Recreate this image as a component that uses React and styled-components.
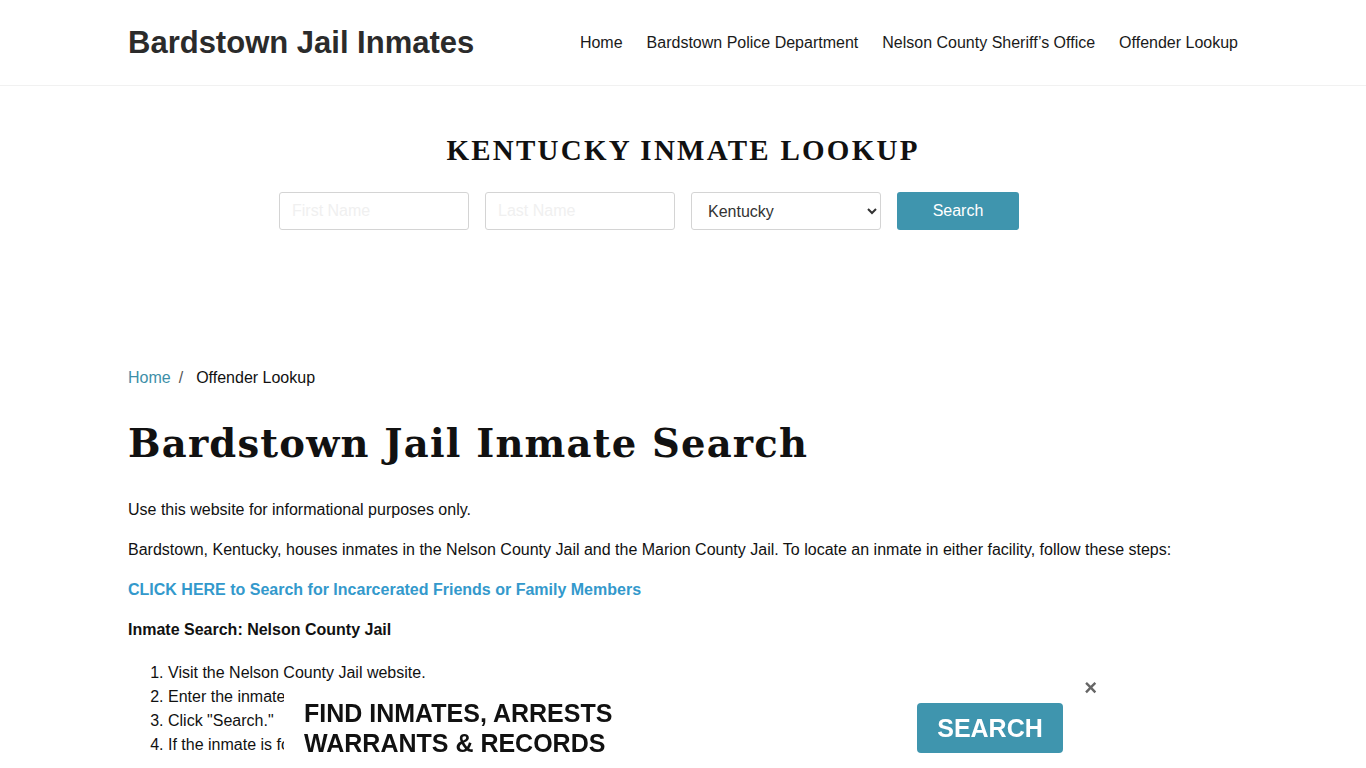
import React from "react";
import styled, { createGlobalStyle } from "styled-components";

const GlobalStyle = createGlobalStyle`
  body {
    margin: 0;
    background: #fff;
    font-family: "Liberation Sans", Arial, sans-serif;
    color: #111;
    font-size: 16px;
  }
`;

const App = () => {
  return (
    <>
      <GlobalStyle />
      <Header>
        <Container>
          <HeaderRow>
            <Brand>Bardstown Jail Inmates</Brand>
            <Nav>
              <NavLink>Home</NavLink>
              <NavLink>Bardstown Police Department</NavLink>
              <NavLink>Nelson County Sheriff’s Office</NavLink>
              <NavLink>Offender Lookup</NavLink>
            </Nav>
          </HeaderRow>
        </Container>
      </Header>

      <Hero>
        <HeroTitle>KENTUCKY INMATE LOOKUP</HeroTitle>
        <SearchForm>
          <Field type="text" placeholder="First Name" />
          <Field type="text" placeholder="Last Name" />
          <Select defaultValue="Kentucky">
            <option>Kentucky</option>
          </Select>
          <SearchButton type="button">Search</SearchButton>
        </SearchForm>
      </Hero>

      <Container>
        <Breadcrumb>
          <Crumb>Home</Crumb>
          <Slash>/</Slash>
          <span>Offender Lookup</span>
        </Breadcrumb>
        <PageTitle>Bardstown Jail Inmate Search</PageTitle>
        <Para>Use this website for informational purposes only.</Para>
        <Para>
          Bardstown, Kentucky, houses inmates in the Nelson County Jail and the
          Marion County Jail. To locate an inmate in either facility, follow
          these steps:
        </Para>
        <Para>
          <CtaLink>CLICK HERE to Search for Incarcerated Friends or Family Members</CtaLink>
        </Para>
        <Para $tight>
          <strong>Inmate Search: Nelson County Jail</strong>
        </Para>
        <Steps>
          <li>Visit the Nelson County Jail website.</li>
          <li>Enter the inmate's name in the search field.</li>
          <li>Click "Search."</li>
          <li>If the inmate is found, their details will be displayed.</li>
        </Steps>
      </Container>

      <Banner>
        <BannerText>
          FIND INMATES, ARRESTS
          <br />
          WARRANTS &amp; RECORDS
        </BannerText>
        <BannerButton type="button">SEARCH</BannerButton>
        <Close>×</Close>
      </Banner>
    </>
  );
};

export default App;

// STYLING SECTION:

const Container = styled.div`
  width: 1110px;
  margin: 0 auto;
`;

const Header = styled.header`
  height: 85px;
  border-bottom: 1px solid #f1f1f1;
`;

const HeaderRow = styled.div`
  display: flex;
  align-items: center;
  justify-content: space-between;
  height: 85px;
`;

const Brand = styled.div`
  font-size: 31px;
  font-weight: bold;
  color: #2b2b2b;
`;

const Nav = styled.nav`
  display: flex;
  gap: 24px;
`;

const NavLink = styled.a`
  font-size: 16px;
  color: #1a1a1a;
  cursor: pointer;
`;

const Hero = styled.section`
  display: flex;
  flex-direction: column;
  align-items: center;
  padding-top: 47px;
  height: 193px;
`;

const HeroTitle = styled.h2`
  margin: 0 0 25px;
  font-family: "Liberation Serif", "Times New Roman", serif;
  font-size: 29px;
  font-weight: bold;
  letter-spacing: 2.25px;
  color: #111;
  line-height: 34px;
`;

const SearchForm = styled.div`
  display: flex;
  gap: 16px;
  margin-right: 68px;
`;

const Field = styled.input`
  box-sizing: border-box;
  width: 190px;
  height: 38px;
  border: 1px solid #d4d4d4;
  border-radius: 3px;
  padding: 0 12px;
  font-family: "Liberation Sans", Arial, sans-serif;
  font-size: 16px;
  &::placeholder {
    color: #f0f0f0;
  }
`;

const Select = styled.select`
  box-sizing: border-box;
  width: 190px;
  height: 38px;
  border: 1px solid #d4d4d4;
  border-radius: 3px;
  padding: 0 12px;
  background: #fff;
  color: #333;
  font-family: "Liberation Sans", Arial, sans-serif;
  font-size: 16px;
`;

const SearchButton = styled.button`
  width: 122px;
  height: 38px;
  border: none;
  border-radius: 3px;
  background: #3f95ae;
  color: #fff;
  font-family: "Liberation Sans", Arial, sans-serif;
  font-size: 16px;
`;

const Breadcrumb = styled.div`
  display: flex;
  align-items: center;
  font-size: 16px;
  line-height: 24px;
  color: #111;
  margin-top: 40px;
`;

const Crumb = styled.a`
  color: #3d8fa8;
`;

const Slash = styled.span`
  color: #555;
  padding: 0 13px 0 8px;
`;

const PageTitle = styled.h1`
  margin: 30px 0 30px;
  font-family: "DejaVu Serif", Georgia, serif;
  font-size: 38.5px;
  font-weight: bold;
  letter-spacing: 1.2px;
  line-height: 48px;
  color: #111;
`;

const Para = styled.p`
  margin: 0 0 ${(p) => (p.$tight ? "14px" : "16px")};
  font-size: 16px;
  line-height: 24px;
  color: #111;
`;

const CtaLink = styled.a`
  color: #3399cc;
  font-weight: bold;
  cursor: pointer;
`;

const Steps = styled.ol`
  margin: 0;
  padding-left: 40px;
  padding-top: 5px;
  font-size: 16px;
  line-height: 24px;
`;

const Banner = styled.div`
  position: fixed;
  left: 284px;
  bottom: 0;
  width: 800px;
  height: 82px;
  background: #fff;
  display: flex;
  align-items: center;
  justify-content: space-between;
  box-sizing: border-box;
  padding: 2px 21px 0 20px;
`;

const BannerText = styled.div`
  font-size: 25px;
  font-weight: bold;
  line-height: 30px;
  color: #111;
`;

const BannerButton = styled.button`
  width: 146px;
  height: 50px;
  border: none;
  border-radius: 4px;
  background: #3f95ae;
  color: #fff;
  font-family: "Liberation Sans", Arial, sans-serif;
  font-size: 25px;
  font-weight: bold;
`;

const Close = styled.span`
  position: absolute;
  top: -9px;
  right: -13px;
  font-size: 22px;
  line-height: 22px;
  font-weight: bold;
  color: #666;
`;
